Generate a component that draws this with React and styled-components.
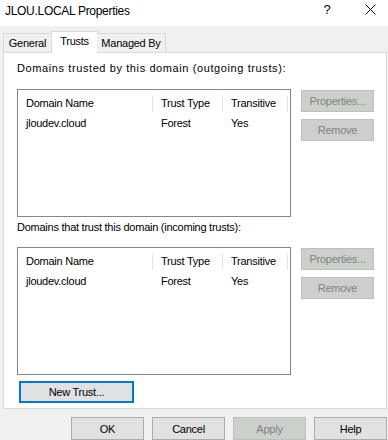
import React from "react"
import styled, { createGlobalStyle } from "styled-components"

const GlobalStyle = createGlobalStyle`
  html, body {
    margin: 0;
    padding: 0;
    background: #f0f0f0;
  }
  * {
    box-sizing: border-box;
  }
`

const Dialog = styled.div`
  width: 388px;
  height: 440px;
  background: #f0f0f0;
  font-family: "Liberation Sans", Arial, sans-serif;
  font-size: 11px;
  letter-spacing: -0.25px;
  color: #000;
  overflow: hidden;
  display: flex;
  flex-direction: column;
`

const TitleBar = styled.div`
  height: 26px;
  background: #fff;
  display: flex;
  align-items: center;
  padding-left: 5px;
`

const Title = styled.div`
  flex: 1;
  font-size: 12px;
  letter-spacing: -0.3px;
  margin-top: -3px;
`

const TitleButton = styled.div`
  width: ${p => p.$w}px;
  height: 26px;
  display: flex;
  align-items: center;
  justify-content: center;
  font-size: 13px;
  margin-top: -6px;
`

const TabStrip = styled.div`
  display: flex;
  align-items: flex-end;
  height: 26px;
  padding-left: 3px;
  position: relative;
  z-index: 1;
`

const Tab = styled.div`
  flex: none;
  white-space: nowrap;
  width: ${p => p.$w}px;
  height: ${p => (p.$active ? "22px" : "19px")};
  margin-bottom: ${p => (p.$active ? "-1px" : "0")};
  margin-left: ${p => (p.$active ? "-1px" : "0")};
  margin-right: ${p => (p.$active ? "-1px" : "0")};
  border: 1px solid #d9d9d9;
  border-bottom: none;
  border-left: ${p => (p.$noLeft ? "none" : "1px solid #d9d9d9")};
  background: ${p => (p.$active ? "#fff" : "#f0f0f0")};
  display: flex;
  align-items: flex-start;
  justify-content: center;
  padding-top: 3px;
`

const Panel = styled.div`
  margin-left: 3px;
  width: 384px;
  height: 360px;
  background: #fff;
  border: 1px solid #d9d9d9;
  padding: 7px 0 0 13px;
  display: flex;
  flex-direction: column;
`

const SectionLabel = styled.div`
  height: 16px;
  line-height: 16px;
  white-space: nowrap;
  margin-top: ${p => p.$top || 0}px;
  margin-bottom: ${p => p.$gap}px;
  letter-spacing: ${p => p.$spacing ?? -0.25}px;
`

const ListRow = styled.div`
  display: flex;
  gap: 10px;
`

const ListBox = styled.div`
  width: 274px;
  height: 128px;
  border: 1px solid #828790;
  background: #fff;
  padding-top: 5px;
`

const HeaderRow = styled.div`
  display: flex;
  height: 17px;
  align-items: center;
`

const DataRow = styled.div`
  display: flex;
  height: 17px;
  align-items: center;
  margin-top: 3px;
`

const Cell = styled.div`
  width: ${p => p.$w}px;
  padding-left: 8px;
  height: 17px;
  line-height: 17px;
  border-right: ${p => (p.$sep ? "1px solid #e5e5e5" : "none")};
  white-space: nowrap;
`

const SideButtons = styled.div`
  display: flex;
  flex-direction: column;
  gap: 7px;
  padding-top: 1px;
`

const Button = styled.div`
  flex: none;
  width: ${p => p.$w || 73}px;
  height: ${p => p.$h || 22}px;
  display: flex;
  align-items: center;
  justify-content: center;
  white-space: nowrap;
  background: ${p => (p.$disabled ? "#cccfcb" : "#e1e1e1")};
  border: ${p =>
    p.$focus ? "2px solid #0078d7" : p.$disabled ? "1px solid #bfbfbf" : "1px solid #adadad"};
  color: ${p => (p.$disabled ? "#838383" : "#000")};
`

const NewTrustRow = styled.div`
  margin-top: 6px;
  padding-left: 2px;
`

const Footer = styled.div`
  display: flex;
  justify-content: flex-end;
  gap: 8px;
  padding-top: 8px;
  padding-right: 1px;
`

const columns = [
  { label: "Domain Name", w: 135 },
  { label: "Trust Type", w: 70 },
  { label: "Transitive", w: 65 },
]

const TrustList = () => (
  <ListRow>
    <ListBox>
      <HeaderRow>
        {columns.map(c => (
          <Cell key={c.label} $w={c.w} $sep>{c.label}</Cell>
        ))}
      </HeaderRow>
      <DataRow>
        <Cell $w={135}>jloudev.cloud</Cell>
        <Cell $w={70}>Forest</Cell>
        <Cell $w={65}>Yes</Cell>
      </DataRow>
    </ListBox>
    <SideButtons>
      <Button $disabled>Properties...</Button>
      <Button $disabled>Remove</Button>
    </SideButtons>
  </ListRow>
)

const CloseIcon = () => (
  <svg width="11" height="11" viewBox="0 0 11 11">
    <path d="M0.5 0.5 L10.5 10.5 M10.5 0.5 L0.5 10.5" stroke="#000" strokeWidth="1" fill="none" />
  </svg>
)

const App = () => (
  <Dialog>
    <GlobalStyle />
    <TitleBar>
      <Title>JLOU.LOCAL Properties</Title>
      <TitleButton $w={50}>?</TitleButton>
      <TitleButton $w={36}><CloseIcon /></TitleButton>
    </TitleBar>
    <TabStrip>
      <Tab $w={49}>General</Tab>
      <Tab $active $w={47}>Trusts</Tab>
      <Tab $w={69} $noLeft>Managed By</Tab>
    </TabStrip>
    <Panel>
      <SectionLabel $gap={13} $spacing={0.6}>
        Domains trusted by this domain (outgoing trusts):
      </SectionLabel>
      <TrustList />
      <SectionLabel $gap={12} $top={2}>
        Domains that trust this domain (incoming trusts):
      </SectionLabel>
      <TrustList />
      <NewTrustRow>
        <Button $focus $w={115} $h={22}>New Trust...</Button>
      </NewTrustRow>
    </Panel>
    <Footer>
      <Button $h={23}>OK</Button>
      <Button $h={23}>Cancel</Button>
      <Button $h={23} $disabled>Apply</Button>
      <Button $h={23}>Help</Button>
    </Footer>
  </Dialog>
)

export default App
